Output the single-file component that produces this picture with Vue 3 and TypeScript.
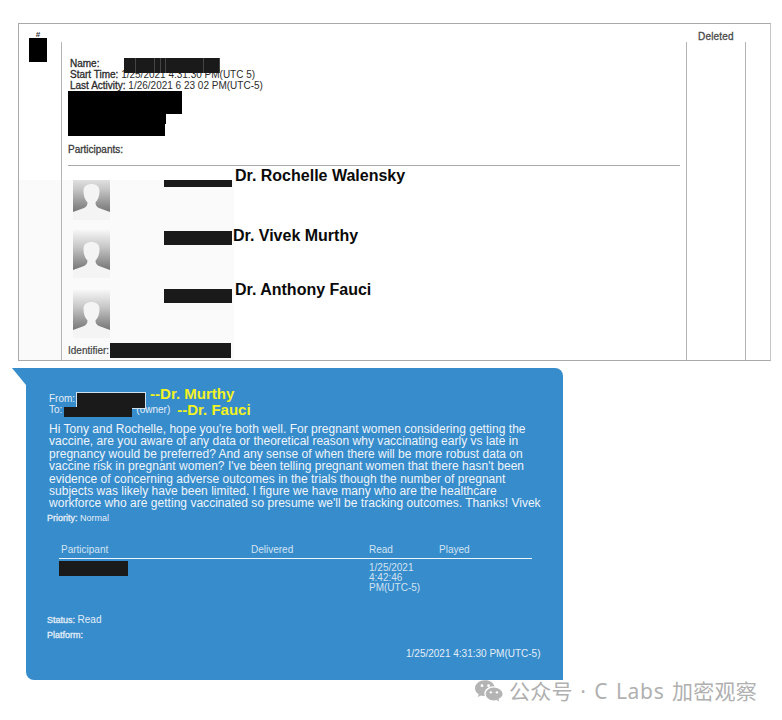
<template>
  <div class="page">
    <section class="record">
      <div class="index-cell">
        <span class="hash">#</span>
        <span class="redact index-redact"></span>
      </div>
      <div class="main-cell">
        <div class="meta">
          <div class="meta-line name-line">
            <b>Name:</b>
            <span class="name-redact">
              <i v-for="w in nameChunks" :key="w" class="redact" :style="{ width: w + 'px' }"></i>
            </span>
          </div>
          <div class="meta-line"><b>Start Time:</b> 1/25/2021 4:31:30 PM(UTC 5)</div>
          <div class="meta-line"><b>Last Activity:</b> 1/26/2021 6 23 02 PM(UTC-5)</div>
        </div>
        <div class="block-redact">
          <span class="redact r1"></span>
          <span class="redact r2"></span>
          <span class="redact r3"></span>
        </div>
        <div class="participants-label">Participants:</div>
        <ul class="participants">
          <li v-for="p in participants" :key="p.name" class="participant" :class="p.cls">
            <svg class="avatar" viewBox="0 0 37 48" preserveAspectRatio="xMidYMax slice" aria-hidden="true">
              <rect width="37" height="48" fill="#f4f4f4" />
              <path :fill="`url(#shade-${p.cls})`" d="M0 1H37V40L26 36C23.500 35 22.500 33 22.500 30.500C25 28 26.500 24 26.500 19C26.500 14 23 12 18.500 12C14 12 10.500 14 10.500 19C10.500 24 12 28 14.500 30.500C14.500 33 13.500 35 11 36L0 40Z" />
              <defs>
                <linearGradient :id="`shade-${p.cls}`" x1="0" y1="0" x2="0" y2="1">
                  <stop offset="0" stop-color="#f4f4f4" />
                  <stop offset="0.4" stop-color="#c8c8c8" />
                  <stop offset="0.85" stop-color="#8a8a8a" />
                  <stop offset="1" stop-color="#777" />
                </linearGradient>
              </defs>
            </svg>
            <span class="redact part-redact"></span>
            <span class="part-name">{{ p.name }}</span>
          </li>
        </ul>
        <div class="identifier"><span>Identifier:</span><span class="redact id-redact"></span></div>
      </div>
      <div class="deleted-cell"><span class="deleted-title">Deleted</span></div>
      <div class="last-cell"></div>
    </section>

    <section class="bubble">
      <div class="addr">
        <div class="addr-line from">
          <span>From:</span><span class="redact from-redact"></span><strong>--Dr. Murthy</strong>
        </div>
        <div class="addr-line to">
          <span>To:</span><span class="redact to-redact"></span><span class="owner">(owner)</span><strong>--Dr. Fauci</strong>
        </div>
      </div>
      <p class="body">
        <span v-for="line in bodyLines" :key="line" class="body-line">{{ line }}</span>
      </p>
      <div class="small priority"><b>Priority:</b> Normal</div>
      <div class="receipts">
        <div class="receipts-head">
          <span>Participant</span><span>Delivered</span><span>Read</span><span>Played</span>
        </div>
        <div class="receipts-row">
          <span><i class="redact receipt-redact"></i></span>
          <span></span>
          <span class="read-at">1/25/2021<br />4:42:46<br />PM(UTC-5)</span>
          <span></span>
        </div>
      </div>
      <div class="small status"><b>Status:</b> <span>Read</span></div>
      <div class="small platform"><b>Platform:</b></div>
      <div class="sent-at">1/25/2021 4:31:30 PM(UTC-5)</div>
    </section>

    <footer class="watermark">
      <svg class="wechat" viewBox="0 0 30 24" aria-hidden="true">
        <path fill="#b4b4b4" d="M11 1C5 1 0 4.800 0 9.500C0 12.200 1.500 14.400 4 16L3 19L6.500 17.300C7.700 17.700 9 17.900 10.400 17.900C10.100 17.100 10 16.300 10 15.500C10 11 14.300 7.500 19.700 7.500L21 7.600C20 3.800 16 1 11 1Z" />
        <path fill="#b4b4b4" d="M20 8.800C15.300 8.800 11.500 12 11.500 15.800C11.500 19.600 15.300 22.700 20 22.700C21.100 22.700 22.100 22.500 23.100 22.200L26 23.800L25.200 21C27.900 19.700 29.500 17.900 29.500 15.800C29.500 12 25 8.800 20 8.800Z" />
        <circle cx="7.500" cy="6.800" r="1.500" fill="#fff" />
        <circle cx="14.500" cy="6.800" r="1.500" fill="#fff" />
        <circle cx="17" cy="14" r="1.300" fill="#fff" />
        <circle cx="23.500" cy="14" r="1.300" fill="#fff" />
      </svg>
      <span>公众号<span class="wm-latin"> · C Labs </span>加密观察</span>
    </footer>
  </div>
</template>

<script setup lang="ts">
interface Participant {
  name: string
  cls: string
}

const nameChunks: number[] = [12, 19, 6, 5, 38, 16]

const participants: Participant[] = [
  { name: 'Dr. Rochelle Walensky', cls: 'p1' },
  { name: 'Dr. Vivek Murthy', cls: 'p2' },
  { name: 'Dr. Anthony Fauci', cls: 'p3' }
]

const bodyLines: string[] = [
  "Hi Tony and Rochelle, hope you're both well. For pregnant women considering getting the",
  'vaccine, are you aware of any data or theoretical reason why vaccinating early vs late in',
  'pregnancy would be preferred? And any sense of when there will be more robust data on',
  "vaccine risk in pregnant women? I've been telling pregnant women that there hasn't been",
  'evidence of concerning adverse outcomes in the trials though the number of pregnant',
  'subjects was likely have been limited. I figure we have many who are the healthcare',
  "workforce who are getting vaccinated so presume we'll be tracking outcomes. Thanks! Vivek"
]
</script>

<style>
html,
body {
  margin: 0;
  background: #fff;
}
</style>

<style scoped>
.page {
  width: 782px;
  height: 720px;
  padding-top: 23px;
  box-sizing: border-box;
  overflow: hidden;
  font-family: "Liberation Sans", Arial, sans-serif;
  color: #333;
  background: #fff;
}

.redact {
  display: block;
  background: #1a1a1a;
}

.record {
  display: grid;
  grid-template-columns: 42px 625px 60px 24px;
  width: 753px;
  height: 338px;
  margin-left: 18px;
  box-sizing: border-box;
  border: 1px solid #a9a9a9;
  border-right-color: #c4c4c4;
  background: linear-gradient(#fafafa, #fafafa) no-repeat 0 156px / 215px 100%;
}

.index-cell {
  padding: 8px 0 0 10px;
}

.hash {
  display: block;
  width: 18px;
  font-size: 8px;
  line-height: 6px;
  font-weight: bold;
  text-align: center;
}

.index-redact {
  width: 18px;
  height: 24px;
  background: #000;
}

.main-cell {
  margin-top: 18px;
  padding-left: 6px;
  border-left: 1px solid #b4b4b4;
}

.meta {
  padding: 16px 0 0 2px;
  font-size: 10px;
  line-height: 11px;
  color: #2c2c2c;
}

.meta-line {
  white-space: nowrap;
}

.meta b,
.small b {
  font-weight: normal;
  -webkit-text-stroke: 0.3px currentColor;
}

.name-line {
  position: relative;
  display: flex;
  height: 11px;
}

.name-redact {
  display: flex;
  height: 15px;
  margin-left: 25px;
}

.name-redact .redact {
  box-sizing: border-box;
  border-right: 1px solid #444;
  height: 15px;
}

.block-redact .redact {
  background: #000;
}

.r1 {
  width: 114px;
  height: 23px;
}

.r2 {
  width: 98px;
  height: 10px;
}

.r3 {
  width: 97px;
  height: 12px;
}

.participants-label {
  margin-top: 8px;
  font-size: 10px;
  line-height: 12px;
  color: #3a3a3a;
  -webkit-text-stroke: 0.3px currentColor;
}

.participants {
  list-style: none;
  margin: 9px 0 0;
  padding: 0;
  width: 612px;
  border-top: 1px solid #a9a9a9;
}

.participant {
  display: flex;
  align-items: flex-start;
}

.p1 {
  height: 64px;
}

.p2 {
  height: 59px;
}

.p3 {
  height: 54px;
}

.avatar {
  flex: none;
  width: 37px;
  height: 48px;
  margin-left: 5px;
}

.p1 .avatar {
  height: 40px;
  margin-top: 14px;
}

.p3 .avatar {
  margin-top: 1px;
}

.part-redact {
  flex: none;
  width: 68px;
  height: 14px;
  margin-left: 54px;
}

.p1 .part-redact {
  height: 7px;
  margin-top: 14px;
}

.p2 .part-redact {
  margin-top: 1px;
}

.part-name {
  margin-left: 3px;
  font-size: 16px;
  line-height: 20px;
  font-weight: bold;
  color: #0a0a0a;
}

.p2 .part-name {
  margin: -4px 0 0 1px;
}

.p3 .part-name {
  margin-top: -9px;
}

.identifier {
  display: flex;
  align-items: center;
  height: 15px;
  font-size: 10px;
  color: #444;
  -webkit-text-stroke: 0.2px currentColor;
}

.id-redact {
  width: 121px;
  height: 15px;
  margin-left: 1px;
}

.deleted-cell {
  margin-top: 18px;
  border-left: 1px solid #b4b4b4;
  border-right: 1px solid #b4b4b4;
}

.deleted-title {
  display: block;
  margin-top: -11px;
  padding-left: 11px;
  font-size: 10px;
  line-height: 12px;
  letter-spacing: 0.2px;
  color: #4a4a4a;
  -webkit-text-stroke: 0.3px currentColor;
}

.bubble {
  position: relative;
  width: 537px;
  height: 312px;
  margin: 7px 0 0 26px;
  padding: 25px 0 0 23px;
  box-sizing: border-box;
  border-radius: 0 8px 0 8px;
  background: #378ccc;
  color: #e4eef7;
  font-size: 10px;
}

.bubble::before {
  content: "";
  position: absolute;
  left: -14px;
  top: 0;
  border-top: 17px solid #378ccc;
  border-left: 14px solid transparent;
}

.addr-line {
  display: flex;
  align-items: center;
  height: 11px;
  line-height: 11px;
  white-space: nowrap;
}

.addr-line strong {
  font-size: 15px;
  line-height: 12px;
  font-weight: bold;
  color: #f2f21f;
}

.from-redact {
  position: relative;
  z-index: 1;
  width: 68px;
  height: 15px;
  margin: 4px 0 0 2px;
  outline: 1px solid #cfe0ee;
}

.from strong {
  margin: -9px 0 0 5px;
}

.to-redact {
  position: relative;
  z-index: 2;
  width: 68px;
  height: 10px;
  margin: 5px 0 0 2px;
}

.owner {
  margin-left: 4px;
}

.to strong {
  margin: 1px 0 0 7px;
}

.body {
  margin: 8px 0 0;
  font-size: 12px;
  line-height: 12.4px;
  letter-spacing: 0.025px;
  color: #eef5fb;
}

.body-line {
  display: block;
  white-space: nowrap;
}

.small {
  margin-left: -2px;
  font-size: 9px;
  line-height: 11px;
}

.priority {
  margin-top: 3px;
}

.receipts {
  width: 473px;
  margin: 20.5px 0 0 10px;
  font-size: 10px;
  color: #d3e3f1;
}

.receipts-head,
.receipts-row {
  display: grid;
  grid-template-columns: 190px 118px 70px 1fr;
}

.receipts-head {
  padding: 0 0 2px 2px;
  border-bottom: 1px solid #eef5fb;
  line-height: 12px;
}

.receipt-redact {
  display: block;
  width: 69px;
  height: 15px;
  margin-top: 2px;
}

.read-at {
  margin-left: 2px;
  padding-top: 4px;
  line-height: 10px;
}

.status {
  margin-top: 20.5px;
}

.status span {
  font-size: 10px;
}

.platform {
  margin-top: 4px;
}

.sent-at {
  margin: 7.5px 0 0 357px;
  font-size: 10px;
  line-height: 12px;
  white-space: nowrap;
}

.watermark {
  position: relative;
  display: flex;
  align-items: center;
  gap: 6px;
  margin: -2px 0 0 475px;
  font-family: "Noto Sans CJK SC", "Noto Sans", sans-serif;
  font-size: 21px;
  line-height: 24px;
  letter-spacing: 0.2px;
  color: #b0b0b0;
  white-space: nowrap;
}

.wm-latin {
  font-family: "Noto Sans", sans-serif;
  letter-spacing: 0.7px;
  word-spacing: 1.5px;
}

.wechat {
  width: 28px;
  height: 23px;
}
</style>
